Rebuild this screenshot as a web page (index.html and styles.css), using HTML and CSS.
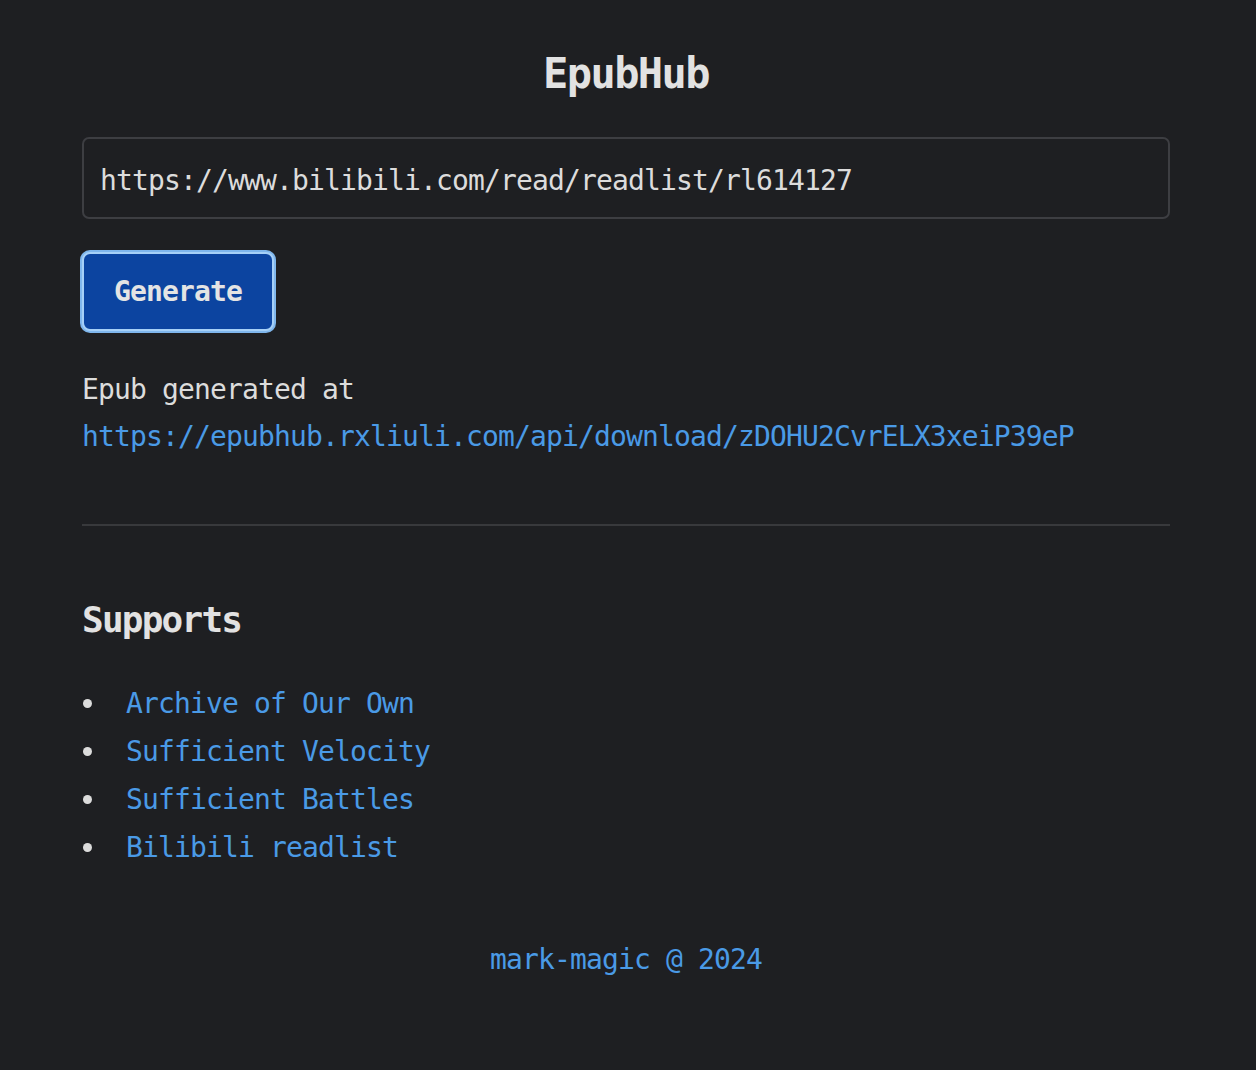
FILE: index.html
```html
<!DOCTYPE html>
<html lang="en">
<head>
<meta charset="utf-8">
<title>EpubHub</title>
<link rel="stylesheet" href="styles.css">
</head>
<body>
<main class="page">
  <h1 class="title">EpubHub</h1>
  <form class="form" onsubmit="return false">
    <input class="url-input" type="text" value="https://www.bilibili.com/read/readlist/rl614127">
    <button class="btn" type="submit">Generate</button>
  </form>
  <p class="result">Epub generated at <a class="link" href="#">https://epubhub.rxliuli.com/api/download/zDOHU2CvrELX3xeiP39eP</a></p>
  <hr class="divider">
  <h2 class="subtitle">Supports</h2>
  <ul class="list">
    <li class="item"><a class="link" href="#">Archive of Our Own</a></li>
    <li class="item"><a class="link" href="#">Sufficient Velocity</a></li>
    <li class="item"><a class="link" href="#">Sufficient Battles</a></li>
    <li class="item"><a class="link" href="#">Bilibili readlist</a></li>
  </ul>
  <footer class="footer"><a class="link" href="#">mark-magic @ 2024</a></footer>
</main>
</body>
</html>
```
FILE: styles.css
```css
html, body {
  margin: 0;
  padding: 0;
  background: #1e1f22;
}
body {
  padding-right: 4px;
  color: #dcdcdc;
  font-family: "DejaVu Sans Mono", "Liberation Mono", monospace;
  font-size: 28px;
  letter-spacing: -0.86px;
}
.page {
  max-width: 1088px;
  margin: 0 auto;
  display: flex;
  flex-direction: column;
}
.title {
  margin: 46px 0 0;
  text-align: center;
  font-size: 42px;
  line-height: 56px;
  letter-spacing: -1.6px;
  font-weight: bold;
  color: #e2e2e2;
}
.form {
  display: flex;
  flex-direction: column;
  align-items: flex-start;
  margin-top: 35px;
}
.url-input {
  box-sizing: border-box;
  width: 100%;
  height: 82px;
  padding: 4px 16px 0;
  background: #1e1f22;
  border: 2px solid #3d3e42;
  border-radius: 7px;
  color: #dcdcdc;
  font: inherit;
  letter-spacing: -0.86px;
  outline: none;
}
.btn {
  box-sizing: border-box;
  margin-top: 33px;
  width: 192px;
  height: 79px;
  padding: 0;
  background: #0c44a0;
  border: 2px solid #a6d0f7;
  box-shadow: 0 0 0 2px #7fb6ec;
  border-radius: 8px;
  color: #e4e4e4;
  font: inherit;
  font-weight: bold;
  letter-spacing: -0.86px;
  cursor: pointer;
}
.result {
  margin: 35px 0 0;
  line-height: 47px;
}
.link {
  color: #4a9ae6;
  text-decoration: none;
}
.divider {
  width: 100%;
  margin: 64px 0 0;
  border: 0;
  border-top: 2px solid #38393c;
}
.subtitle {
  margin: 70px 0 0;
  font-size: 36px;
  line-height: 48px;
  letter-spacing: -1.77px;
  font-weight: bold;
  color: #e2e2e2;
}
.list {
  list-style: none;
  margin: 36px 0 0;
  padding: 0;
}
.item {
  display: flex;
  align-items: center;
  line-height: 48px;
}
.item::before {
  content: "";
  width: 9px;
  height: 9px;
  border-radius: 50%;
  background: #dcdcdc;
  margin: 0 34px 2px 1px;
  flex: none;
}
.footer {
  margin-top: 64px;
  text-align: center;
  line-height: 48px;
}
```
